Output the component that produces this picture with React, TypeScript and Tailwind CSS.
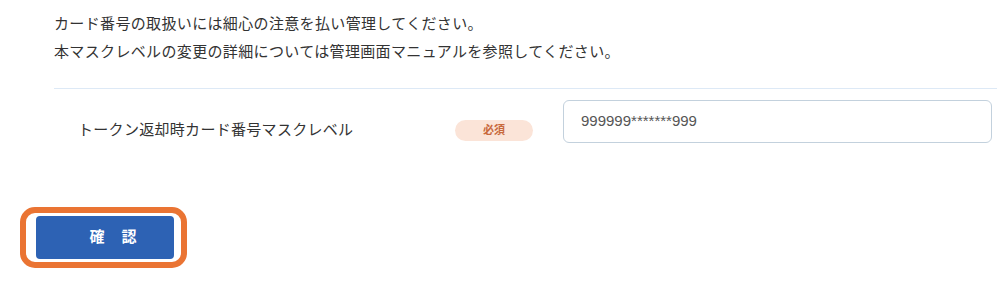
export default function App() {
  return (
    <div
      className="w-[1008px] h-[300px] bg-white text-[#333333]"
      style={{ fontFamily: '"Liberation Sans", "Noto Sans CJK JP", sans-serif' }}
    >
      <div className="pl-[54px] pt-[10px] text-[15px] leading-[28px] tracking-[0.35px]">
        <p>カード番号の取扱いには細心の注意を払い管理してください。</p>
        <p>本マスクレベルの変更の詳細については管理画面マニュアルを参照してください。</p>
      </div>
      <div className="ml-[54px] mr-[11px] mt-[22px] h-px bg-[#dde9f6]" />
      <div className="flex items-start pt-[11px]">
        <div className="w-[455px] shrink-0 pl-[78px] pt-[18px] text-[15px] leading-[24px] tracking-[0.3px] text-[#333333]">
          トークン返却時カード番号マスクレベル
        </div>
        <div className="w-[108px] shrink-0 pt-[20px]">
          <span className="flex h-[21px] w-[78px] items-center justify-center rounded-full bg-[#fbe4d8] text-[11px] font-bold text-[#c8693c]">
            必須
          </span>
        </div>
        <div className="flex h-[43px] w-[429px] shrink-0 items-center rounded-[6px] border border-[#c3d1dd] px-[17px] text-[15px] text-[#555555]">
          999999*******999
        </div>
      </div>
      <div className="relative ml-[36px] mt-[73px] w-[138px]">
        <button className="flex h-[43px] w-[138px] items-center justify-center gap-[17px] rounded-[4px] bg-[#2d62b4] pl-[16px] text-[15px] font-bold text-white">
          <span>確</span>
          <span>認</span>
        </button>
        <div className="pointer-events-none absolute left-[-16px] top-[-9px] h-[61px] w-[167px] rounded-[15px] border-[6px] border-[#ea7433]" />
      </div>
    </div>
  );
}
